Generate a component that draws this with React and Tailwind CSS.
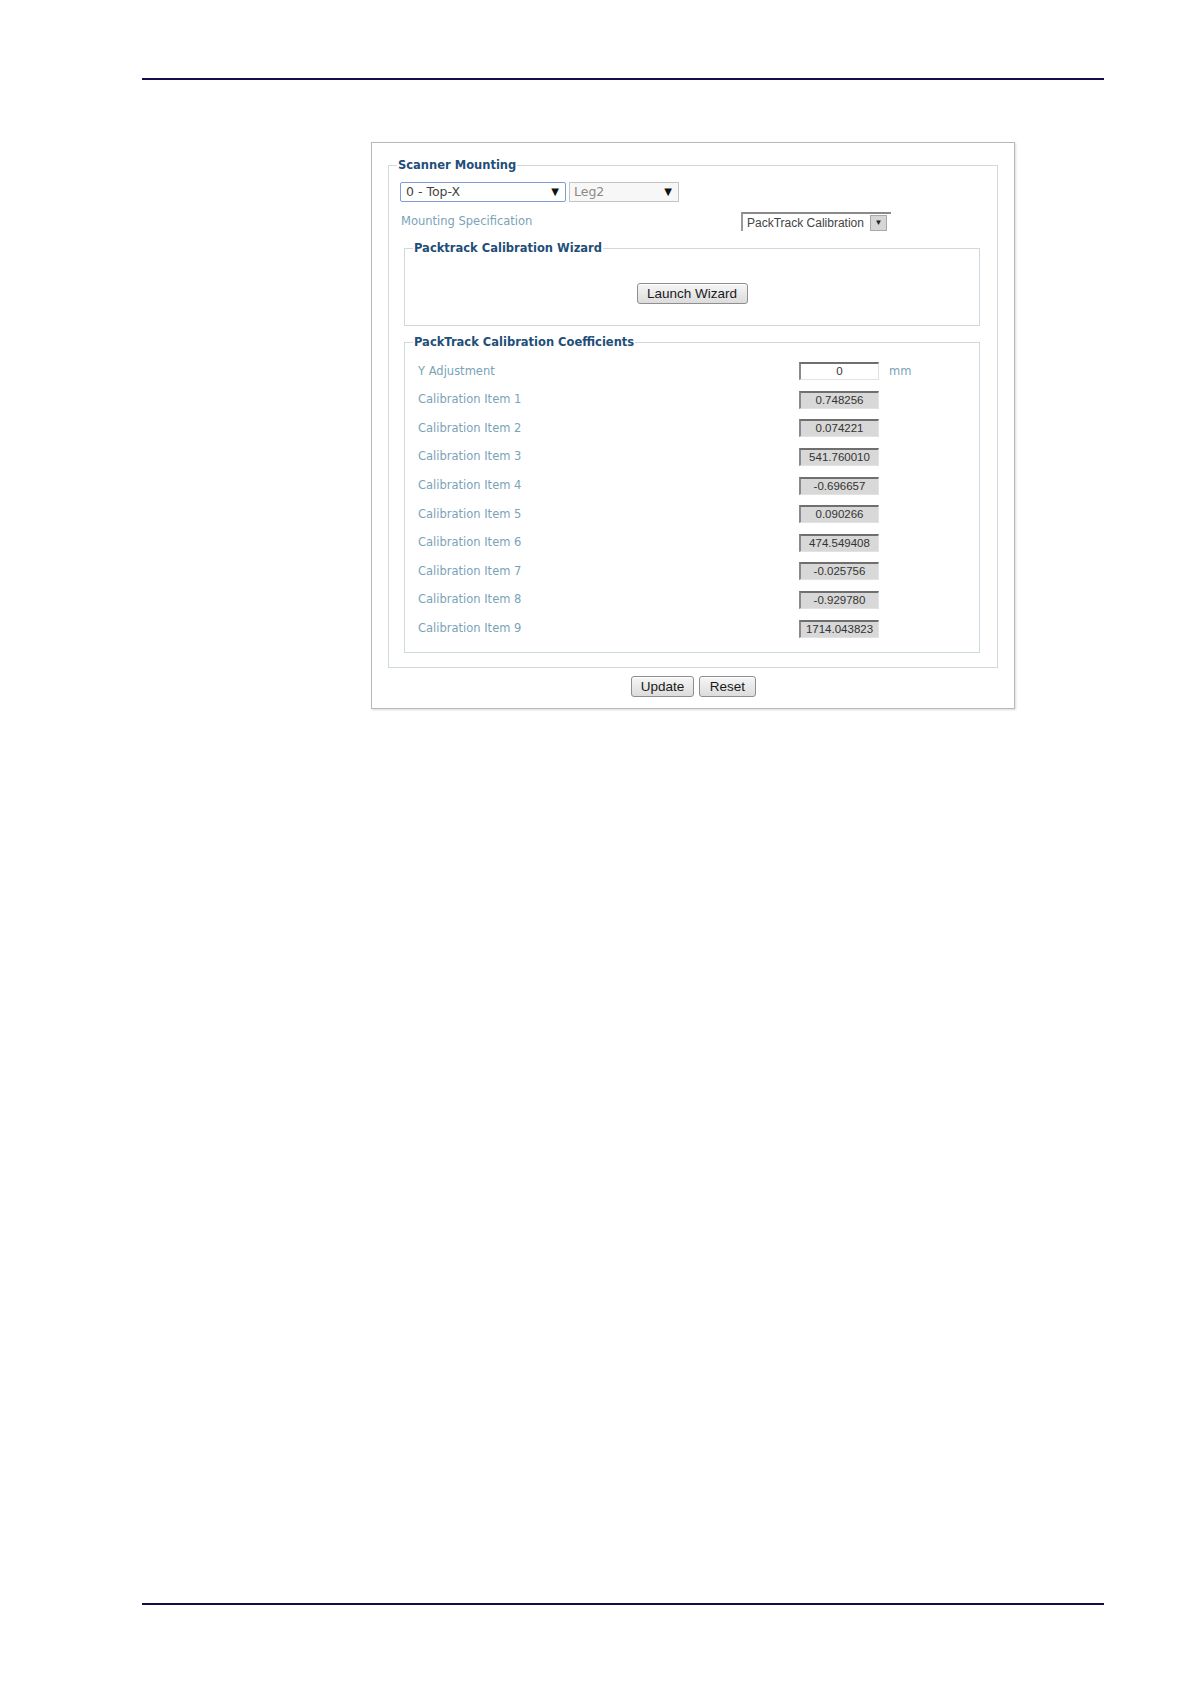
const coefficients = [
  ['Calibration Item 1', '0.748256'],
  ['Calibration Item 2', '0.074221'],
  ['Calibration Item 3', '541.760010'],
  ['Calibration Item 4', '-0.696657'],
  ['Calibration Item 5', '0.090266'],
  ['Calibration Item 6', '474.549408'],
  ['Calibration Item 7', '-0.025756'],
  ['Calibration Item 8', '-0.929780'],
  ['Calibration Item 9', '1714.043823'],
];

const verdana = "font-['DejaVu_Sans',Verdana,sans-serif]";
const arial = "font-['Liberation_Sans',Arial,sans-serif]";

function Arrow() {
  return <span className="text-[10px] leading-none text-[#111]">▼</span>;
}

function Button({ children, className = '' }) {
  return (
    <button
      className={`h-[21px] rounded-[3px] border border-[#8e8e8e] bg-gradient-to-b from-[#f6f6f6] to-[#dcdcdc] px-[8px] text-[13.5px] leading-none text-[#1a1a1a] shadow-[inset_0_1px_0_#fff] ${arial} ${className}`}
    >
      {children}
    </button>
  );
}

function Legend({ children }) {
  return (
    <legend className={`px-[1px] text-[11.5px] font-bold leading-[16px] text-[#1f4e79] ${verdana}`}>
      {children}
    </legend>
  );
}

function ValueBox({ value, editable }) {
  return (
    <div
      className={`flex h-[18px] w-[80px] items-center justify-center border-t-[2px] border-l-[2px] border-r border-b border-t-[#6f6f6f] border-l-[#8a8a8a] border-r-[#e2e2e2] border-b-[#e2e2e2] text-[11.5px] text-[#333] ${arial} ${
        editable ? 'bg-white' : 'bg-[#d8d8d8]'
      }`}
    >
      {value}
    </div>
  );
}

function Row({ label, children }) {
  return (
    <div className="flex h-[28.6px] items-center">
      <div className={`ml-[5px] w-[381px] text-[11.5px] text-[#7aa3b8] ${verdana}`}>{label}</div>
      {children}
    </div>
  );
}

export default function App() {
  return (
    <div className="h-[1684px] w-[1190px] overflow-hidden bg-white">
      <div className="ml-[142px] mt-[78px] h-[2px] w-[962px] bg-[#150d4a]" />

      <div className="ml-[371px] mt-[62px] h-[567px] w-[644px] border border-[#b9b9b9] px-[16px] pt-[14px] shadow-[1px_1px_2px_rgba(0,0,0,0.15)]">
        <fieldset className="h-[511px] border border-[#cdd9df] px-[8px]">
          <Legend>Scanner Mounting</Legend>

          <div className="ml-[3px] mt-[9px] flex gap-[3px]">
            <div className={`flex h-[20px] w-[166px] items-center justify-between rounded-[2px] border border-[#7c9fd6] bg-white pl-[5px] pr-[6px] text-[12.5px] text-[#444] ${verdana}`}>
              <span>0 - Top-X</span>
              <Arrow />
            </div>
            <div className={`flex h-[20px] w-[110px] items-center justify-between border border-[#c4c4c4] bg-[#f7f7f7] pl-[4px] pr-[6px] text-[12.5px] text-[#8a8a8a] ${verdana}`}>
              <span>Leg2</span>
              <Arrow />
            </div>
          </div>

          <div className="mt-[10px] flex h-[19px] items-center">
            <div className={`ml-[4px] w-[340px] text-[11.5px] text-[#7aa3b8] ${verdana}`}>Mounting Specification</div>
            <div className={`flex h-[19px] w-[150px] items-center justify-between border-t-[2px] border-l-[2px] border-t-[#8a8a8a] border-l-[#9a9a9a] bg-white pl-[4px] pr-[4px] text-[12px] text-[#444] ${arial}`}>
              <span>PackTrack Calibration</span>
              <span className="flex h-[16px] w-[17px] items-center justify-center border border-[#a9a9a9] bg-[#d6d6d6] text-[8px] leading-none text-[#222]">
                ▼
              </span>
            </div>
          </div>

          <fieldset className="ml-[7px] mt-[9px] h-[86px] w-[576px] border border-[#cdd9df] px-[8px]">
            <Legend>Packtrack Calibration Wizard</Legend>
            <div className="mt-[27px] flex justify-center">
              <Button className="w-[111px]">Launch Wizard</Button>
            </div>
          </fieldset>

          <fieldset className="ml-[7px] mt-[8px] w-[576px] border border-[#cdd9df] px-[8px] pb-[9px]">
            <Legend>PackTrack Calibration Coefficients</Legend>
            <div className="mt-[7px]">
              <Row label="Y Adjustment">
                <ValueBox value="0" editable />
                <span className={`ml-[10px] text-[11.5px] text-[#7aa3b8] ${verdana}`}>mm</span>
              </Row>
              {coefficients.map(([label, value]) => (
                <Row key={label} label={label}>
                  <ValueBox value={value} />
                </Row>
              ))}
            </div>
          </fieldset>
        </fieldset>

        <div className="mt-[8px] flex justify-center gap-[5px] pl-[1px]">
          <Button className="w-[63px]">Update</Button>
          <Button className="w-[57px]">Reset</Button>
        </div>
      </div>

      <div className="ml-[142px] mt-[894px] h-[2px] w-[962px] bg-[#150d4a]" />
    </div>
  );
}
